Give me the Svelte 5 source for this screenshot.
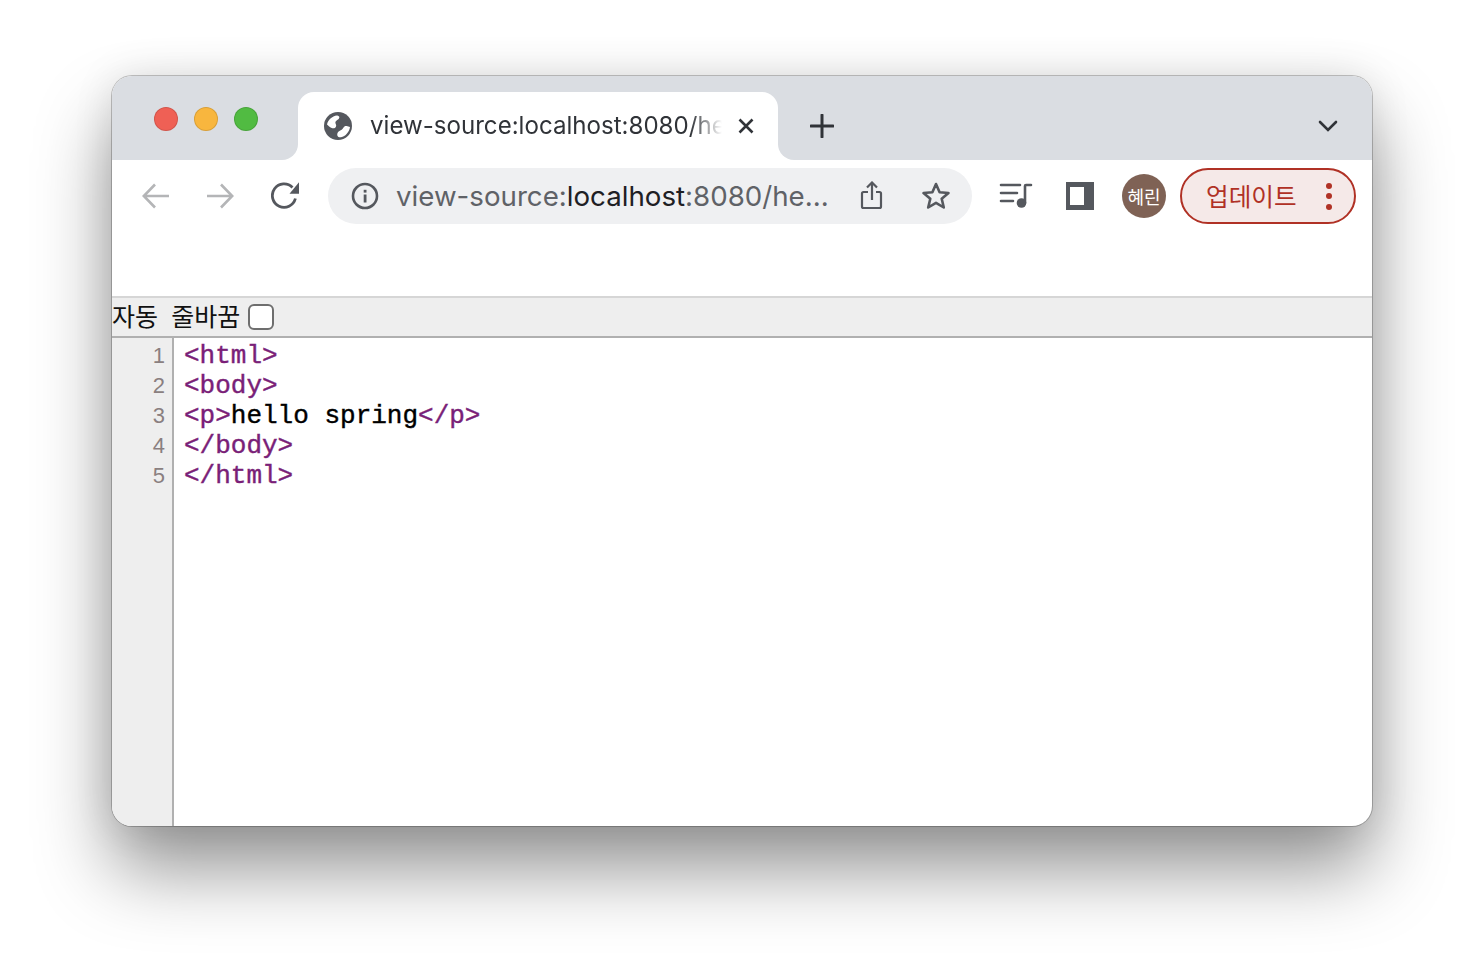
<script>
	const lines = [
		[['t', '<html>']],
		[['t', '<body>']],
		[['t', '<p>'], ['x', 'hello spring'], ['t', '</p>']],
		[['t', '</body>']],
		[['t', '</html>']]
	];
</script>

<div class="stage">
	<div class="window">
		<header class="titlebar">
			<div class="lights">
				<span class="light red"></span>
				<span class="light yellow"></span>
				<span class="light green"></span>
			</div>
			<div class="tab">
				<span class="tab-corner left"></span>
				<span class="tab-corner right"></span>
				<svg class="globe" viewBox="0 0 28 28" width="28" height="28">
					<circle cx="14" cy="14" r="14" fill="#55585e" />
					<path d="M3 12.500C4 8 8 4 13 3.500c1.500 0 2.500 1 2.300 2.200-.3 1.800-3 2.300-3.800 4-.6 1.400.8 2.500.7 4-.1 2-2.500 3.200-4.500 2.300C5.500 15.300 4 13.500 3 12.500Z" fill="#fff" />
					<path d="M26 15c-.5 4.500-4.500 9.500-9 10.300-2 .3-3.800-.8-3.800-2.600 0-2 1.300-3.500 3-4.200 1.800-.7 2.500-1.500 3.200-2.700.7-1.300 1.800-2 3.200-1.700 1.300.3 2.300.9 3.400.9Z" fill="#fff" />
				</svg>
				<span class="tab-title">view-source:localhost:8080/he</span>
				<svg class="tab-close" viewBox="0 0 18 18" width="18" height="18">
					<path d="M2.500 2.500l13 13M15.500 2.500l-13 13" stroke="#303338" stroke-width="2.600" fill="none" />
				</svg>
			</div>
			<svg class="new-tab" viewBox="0 0 24 24" width="24" height="24">
				<path d="M12 1v22M1 12h22" stroke="#303338" stroke-width="3" stroke-linecap="round" fill="none" />
			</svg>
			<svg class="tab-menu" viewBox="0 0 20 12" width="20" height="12">
				<path d="M2 2l8 8 8-8" stroke="#303338" stroke-width="2.600" stroke-linecap="round" fill="none" />
			</svg>
		</header>

		<div class="toolbar">
			<svg class="nav" viewBox="0 0 28 26" width="28" height="26">
				<path d="M27 13H2M13 1.500 1.800 13 13 24.500" stroke="#b4b5b7" stroke-width="2.600" fill="none" />
			</svg>
			<svg class="nav forward" viewBox="0 0 28 26" width="28" height="26">
				<path d="M1 13h25M15 1.500 26.200 13 15 24.500" stroke="#b4b5b7" stroke-width="2.600" fill="none" />
			</svg>
			<svg class="nav reload" viewBox="0 0 28 28" width="28" height="28">
				<path d="M24.400 16.500A11.700 11.700 0 1 1 21.500 5.500" stroke="#55585e" stroke-width="2.800" fill="none" />
				<path d="M28 .3v11.400h-9.500Z" fill="#55585e" />
			</svg>
			<div class="omnibox">
				<svg class="info" viewBox="0 0 28 28" width="28" height="28">
					<circle cx="14" cy="14" r="12" stroke="#55585e" stroke-width="2.600" fill="none" />
					<rect x="12.700" y="12.500" width="2.800" height="8" fill="#55585e" />
					<rect x="12.700" y="7.800" width="2.800" height="2.800" fill="#55585e" />
				</svg>
				<span class="url">view-source:<b>localhost</b>:8080/he...</span>
				<svg class="share" viewBox="0 0 24 30" width="24" height="30">
					<path d="M12 19V2M7 6.500 12 1.500l5 5" stroke="#55585e" stroke-width="2.200" fill="none" />
					<path d="M8 11H3.500A1.500 1.500 0 0 0 2 12.500v13A1.500 1.500 0 0 0 3.500 27h16a1.500 1.500 0 0 0 1.500-1.500v-13a1.500 1.500 0 0 0-1.500-1.500H16" stroke="#55585e" stroke-width="2.200" fill="none" />
				</svg>
				<svg class="star" viewBox="0 0 30 30" width="30" height="30">
					<path d="M15 3l3.600 8.200 8.900.8-6.800 5.800 2.100 8.700L15 21.800l-7.800 4.700 2.100-8.700L2.500 12l8.900-.8Z" stroke="#55585e" stroke-width="2.600" stroke-linejoin="round" fill="none" />
				</svg>
			</div>
			<svg class="media" viewBox="0 0 34 28" width="34" height="28">
				<path d="M2 3h19M2 11h16M2 19h12" stroke="#55585e" stroke-width="2.600" stroke-linecap="round" fill="none" />
				<circle cx="22.500" cy="21" r="4.800" fill="#55585e" />
				<path d="M26 21V4a1 1 0 0 1 1-1h5" stroke="#55585e" stroke-width="2.600" stroke-linecap="round" fill="none" />
			</svg>
			<span class="side-panel"></span>
			<span class="avatar">혜린</span>
			<button class="update">
				<span class="update-label">업데이트</span>
				<span class="dots"><i></i><i></i><i></i></span>
			</button>
		</div>

		<div class="bookmarks"></div>

		<label class="wrap-bar">
			<span class="wrap-label">자동 &nbsp;줄바꿈</span>
			<span class="checkbox"></span>
		</label>

		<div class="source">
			<div class="gutter">
				{#each lines as _, i}
					<div>{i + 1}</div>
				{/each}
			</div>
			<pre class="code">{#each lines as line}<div>{#each line as part}<span class={part[0]}>{part[1]}</span>{/each}</div>{/each}</pre>
		</div>
	</div>
</div>

<style>
	:global(body) {
		margin: 0;
		background: #fff;
	}

	.stage {
		width: 1484px;
		height: 974px;
		padding: 76px 112px 148px;
		box-sizing: border-box;
		overflow: hidden;
	}

	.window {
		width: 1260px;
		height: 750px;
		display: flex;
		flex-direction: column;
		border-radius: 20px;
		background: #fff;
		overflow: hidden;
		box-shadow:
			0 0 0 1px rgba(0, 0, 0, 0.22),
			0 44px 76px rgba(0, 0, 0, 0.42),
			0 0 40px rgba(0, 0, 0, 0.1);
		font-family: Inter, Roboto, 'Noto Sans CJK KR', sans-serif;
	}

	.titlebar {
		height: 84px;
		flex: none;
		background: #dadde2;
		display: flex;
		align-items: flex-start;
	}

	.lights {
		width: 186px;
		flex: none;
		display: flex;
		gap: 16px;
		padding: 31px 0 0 42px;
		box-sizing: border-box;
	}

	.light {
		width: 24px;
		height: 24px;
		border-radius: 50%;
		box-sizing: border-box;
		border: 1px solid rgba(0, 0, 0, 0.12);
	}

	.red {
		background: #ef6055;
	}
	.yellow {
		background: #f8b63e;
	}
	.green {
		background: #51bb42;
	}

	.tab {
		position: relative;
		width: 480px;
		height: 68px;
		margin-top: 16px;
		flex: none;
		background: #fff;
		border-radius: 16px 16px 0 0;
		display: flex;
		align-items: center;
		padding: 0 22px 0 26px;
		box-sizing: border-box;
	}

	.tab-corner {
		position: absolute;
		bottom: 0;
		width: 16px;
		height: 16px;
		background: #fff;
	}

	.tab-corner::after {
		content: '';
		position: absolute;
		inset: 0;
		background: #dadde2;
	}

	.tab-corner.left {
		left: -16px;
	}
	.tab-corner.left::after {
		border-bottom-right-radius: 16px;
	}
	.tab-corner.right {
		right: -16px;
	}
	.tab-corner.right::after {
		border-bottom-left-radius: 16px;
	}

	.globe {
		flex: none;
	}

	.tab-title {
		margin: 0 0 2px 18px;
		width: 352px;
		flex: none;
		overflow: hidden;
		white-space: nowrap;
		font-size: 24.100px;
		color: #303338;
		mask-image: linear-gradient(90deg, #000 91%, transparent 100%);
	}

	.tab-close {
		margin-left: 15px;
		flex: none;
	}

	.new-tab {
		margin: 38px 0 0 32px;
		flex: none;
	}

	.tab-menu {
		margin: 44px 34px 0 auto;
		flex: none;
	}

	.toolbar {
		height: 72px;
		flex: none;
		display: flex;
		align-items: flex-start;
	}

	.nav {
		flex: none;
		margin: 23px 0 0 30px;
	}

	.forward {
		margin-left: 36px;
	}

	.reload {
		margin: 22px 0 0 37px;
	}

	.omnibox {
		width: 644px;
		height: 56px;
		margin: 8px 0 0 29px;
		flex: none;
		background: #eff0f2;
		border-radius: 28px;
		display: flex;
		align-items: center;
		box-sizing: border-box;
		padding-left: 23px;
	}

	.info {
		flex: none;
	}

	.url {
		margin-left: 17px;
		width: 448px;
		flex: none;
		white-space: nowrap;
		font-size: 27.700px;
		color: #5f6267;
	}

	.url b {
		font-weight: 400;
		color: #1e2024;
	}

	.share {
		flex: none;
		margin-left: 16px;
	}

	.star {
		flex: none;
		margin-left: 37px;
	}

	.media {
		flex: none;
		margin: 22px 0 0 27px;
	}

	.side-panel {
		flex: none;
		width: 28px;
		height: 28px;
		margin: 22px 0 0 33px;
		box-sizing: border-box;
		background: #fff;
		border: 5px solid #55585e;
		border-left-width: 4px;
		border-right-width: 10px;
	}

	.avatar {
		flex: none;
		width: 44px;
		height: 44px;
		margin: 14px 0 0 28px;
		border-radius: 50%;
		background: #7f6255;
		color: #fff;
		font-size: 18px;
		display: flex;
		align-items: center;
		justify-content: center;
		font-family: 'Noto Sans CJK KR', sans-serif;
	}

	.update {
		flex: none;
		width: 176px;
		height: 56px;
		margin: 8px 0 0 14px;
		box-sizing: border-box;
		border: 2px solid #b03125;
		border-radius: 28px;
		background: #f5e9e8;
		color: #b03125;
		font-family: 'Noto Sans CJK KR', sans-serif;
		font-size: 24.600px;
		display: flex;
		align-items: center;
		padding: 0 0 0 24px;
	}

	.update-label {
		margin-bottom: 2px;
	}

	.dots {
		display: flex;
		flex-direction: column;
		gap: 4.500px;
		margin-left: 29px;
	}

	.dots i {
		width: 6px;
		height: 6px;
		border-radius: 50%;
		background: #b03125;
	}

	.bookmarks {
		height: 64px;
		flex: none;
	}

	.wrap-bar {
		height: 42px;
		flex: none;
		box-sizing: border-box;
		background: #eeeeee;
		border-top: 2px solid #d6d6d6;
		border-bottom: 2px solid #b0b0b0;
		display: flex;
		align-items: center;
		font-family: 'Noto Sans CJK KR', sans-serif;
		font-size: 25px;
		color: #111;
	}

	.wrap-label {
		margin-bottom: 4px;
		word-spacing: 1px;
	}

	.checkbox {
		width: 26px;
		height: 26px;
		margin-left: 8px;
		box-sizing: border-box;
		background: #fff;
		border: 2px solid #6e6e6e;
		border-radius: 6px;
	}

	.source {
		flex: 1;
		display: flex;
		min-height: 0;
	}

	.gutter {
		width: 62px;
		flex: none;
		box-sizing: border-box;
		background: #eeeeee;
		border-right: 2px solid #b0b0b0;
		padding: 3px 7px 0 0;
		text-align: right;
		font-family: 'Liberation Sans', sans-serif;
		font-size: 22px;
		line-height: 30px;
		color: #8a7f80;
	}

	.code {
		margin: 0;
		padding: 3px 0 0 10px;
		font-family: 'Liberation Mono', monospace;
		font-size: 26px;
		line-height: 30px;
		color: #000;
		-webkit-text-stroke: 0.4px currentColor;
	}

	.t {
		color: #7a1f78;
	}
</style>
